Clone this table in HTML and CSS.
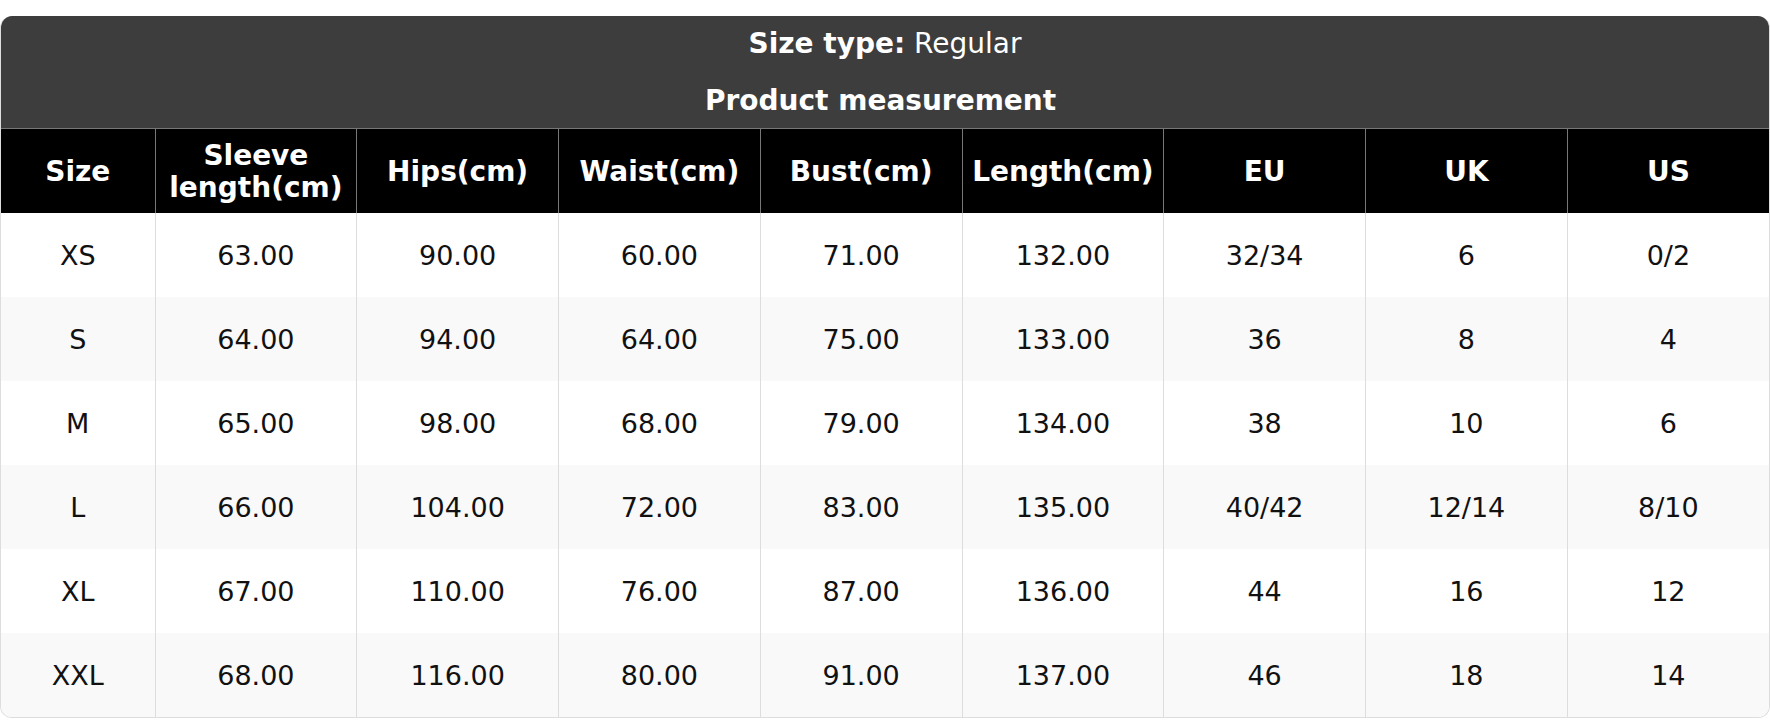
FILE: index.html
```html
<!DOCTYPE html>
<html lang="en">
<head>
<meta charset="utf-8">
<title>Size chart</title>
<link rel="stylesheet" href="styles.css">
</head>
<body>
<div class="card">
  <div class="caption">
    <div class="caption-line"><strong>Size type:</strong> Regular</div>
    <div class="caption-line second"><strong>Product measurement</strong>&nbsp;</div>
  </div>
  <table class="chart">
    <colgroup>
      <col class="col-size">
      <col><col><col><col><col><col><col><col>
    </colgroup>
    <thead>
      <tr>
        <th>Size</th>
        <th>Sleeve<br>length(cm)</th>
        <th>Hips(cm)</th>
        <th>Waist(cm)</th>
        <th>Bust(cm)</th>
        <th>Length(cm)</th>
        <th>EU</th>
        <th>UK</th>
        <th>US</th>
      </tr>
    </thead>
    <tbody>
      <tr><td>XS</td><td>63.00</td><td>90.00</td><td>60.00</td><td>71.00</td><td>132.00</td><td>32/34</td><td>6</td><td>0/2</td></tr>
      <tr><td>S</td><td>64.00</td><td>94.00</td><td>64.00</td><td>75.00</td><td>133.00</td><td>36</td><td>8</td><td>4</td></tr>
      <tr><td>M</td><td>65.00</td><td>98.00</td><td>68.00</td><td>79.00</td><td>134.00</td><td>38</td><td>10</td><td>6</td></tr>
      <tr><td>L</td><td>66.00</td><td>104.00</td><td>72.00</td><td>83.00</td><td>135.00</td><td>40/42</td><td>12/14</td><td>8/10</td></tr>
      <tr><td>XL</td><td>67.00</td><td>110.00</td><td>76.00</td><td>87.00</td><td>136.00</td><td>44</td><td>16</td><td>12</td></tr>
      <tr><td>XXL</td><td>68.00</td><td>116.00</td><td>80.00</td><td>91.00</td><td>137.00</td><td>46</td><td>18</td><td>14</td></tr>
    </tbody>
  </table>
</div>
</body>
</html>
```

FILE: styles.css
```css
html, body {
  margin: 0;
  padding: 0;
  background: #ffffff;
}

body {
  padding-top: 16px;
  font-family: "DejaVu Sans", Verdana, sans-serif;
  color: #111111;
}

.card {
  width: 1770px;
  box-sizing: border-box;
  border: 1px solid #dddddd;
  border-top: none;
  border-radius: 12px;
  overflow: hidden;
  background: #ffffff;
}

.caption {
  background: #3d3d3d;
  color: #ffffff;
  text-align: center;
  font-size: 28px;
}

.caption-line {
  height: 56px;
  line-height: 56px;
}

.caption-line.second {
  height: 55px;
  padding-top: 1px;
  line-height: 56px;
}

.chart {
  width: 100%;
  border-collapse: collapse;
  table-layout: fixed;
  font-size: 27px;
}

.col-size {
  width: 154px;
}

.chart th {
  background: #000000;
  color: #ffffff;
  font-weight: bold;
  font-size: 28px;
  line-height: 32px;
  height: 82px;
  padding: 2px 4px 0;
  border: 1px solid #777777;
  border-bottom: none;
  text-align: center;
  vertical-align: middle;
}

.chart th:first-child {
  border-left: none;
}

.chart th:last-child {
  border-right: none;
}

.chart td {
  height: 84px;
  padding: 0 4px;
  text-align: center;
  vertical-align: middle;
  border-left: 1px solid #dddddd;
  border-right: 1px solid #dddddd;
}

.chart td:first-child {
  border-left: none;
}

.chart td:last-child {
  border-right: none;
}

.chart tbody tr:nth-child(even) td {
  background: #f9f9f9;
}
```
